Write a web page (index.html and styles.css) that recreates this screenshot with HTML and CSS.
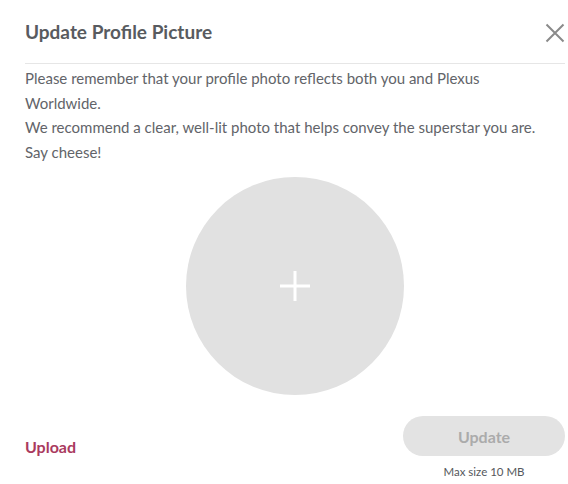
FILE: index.html
```html
<!DOCTYPE html>
<html>
<head>
<meta charset="utf-8">
<link rel="stylesheet" href="styles.css">
</head>
<body>
<div class="modal">
  <div class="modal-header">
    <h2 class="title">Update Profile Picture</h2>
    <button class="close" aria-label="Close">
      <svg width="20" height="20" viewBox="0 0 20 20"><path d="M1.5 1.5 L18.5 18.5 M18.5 1.5 L1.5 18.5" stroke="#8a8a8a" stroke-width="2" fill="none"/></svg>
    </button>
  </div>
  <div class="modal-body">
    <p class="intro">Please remember that your profile photo reflects both you and Plexus Worldwide.<br>We recommend a clear, well-lit photo that helps convey the superstar you are.<br>Say cheese!</p>
    <div class="avatar-wrap">
      <div class="avatar">
        <svg width="30" height="30" viewBox="0 0 30 30"><path d="M15 0 V30 M0 15 H30" stroke="#fff" stroke-width="3"/></svg>
      </div>
    </div>
  </div>
  <div class="modal-footer">
    <a class="upload" href="#">Upload</a>
    <div class="update-col">
      <button class="update" disabled>Update</button>
      <span class="max-size">Max size 10 MB</span>
    </div>
  </div>
</div>
</body>
</html>
```

FILE: styles.css
```css
html, body {
  margin: 0;
  padding: 0;
  background: #fff;
}
body {
  font-family: "Lato", "Open Sans", sans-serif;
  color: #5f6266;
}
.modal {
  width: 568px;
  height: 484px;
  box-sizing: border-box;
  padding: 0 3px 0 25px;
  display: flex;
  flex-direction: column;
}
.modal-header {
  height: 63px;
  border-bottom: 1px solid #e6e6e6;
  display: flex;
  align-items: center;
  justify-content: space-between;
}
.title {
  margin: 0;
  font-size: 19px;
  font-weight: 700;
  color: #585b60;
}
.close {
  border: 0;
  background: none;
  padding: 0;
  width: 20px;
  height: 20px;
  margin-top: 2px;
  display: flex;
}
.modal-body {
  display: flex;
  flex-direction: column;
}
.intro {
  margin: 2px 0 0;
  font-size: 15px;
  line-height: 24.5px;
  color: #626469;
  width: 530px;
}
.avatar-wrap {
  display: flex;
  justify-content: center;
  margin-top: 13px;
}
.avatar {
  width: 218px;
  height: 218px;
  border-radius: 50%;
  background: #e1e1e1;
  display: flex;
  align-items: center;
  justify-content: center;
}
.modal-footer {
  display: flex;
  justify-content: space-between;
  align-items: flex-start;
  margin-top: 21px;
}
.upload {
  margin-top: 21px;
  font-size: 16px;
  font-weight: 700;
  color: #aa3a5e;
  text-decoration: none;
}
.update-col {
  display: flex;
  flex-direction: column;
  align-items: center;
  width: 162px;
}
.update {
  width: 162px;
  height: 40px;
  border: 0;
  border-radius: 20px;
  background: #e3e3e3;
  color: #ababab;
  font-family: "Lato", sans-serif;
  font-size: 16px;
  font-weight: 700;
}
.max-size {
  margin-top: 9px;
  font-size: 11.5px;
  color: #55585c;
}
```
